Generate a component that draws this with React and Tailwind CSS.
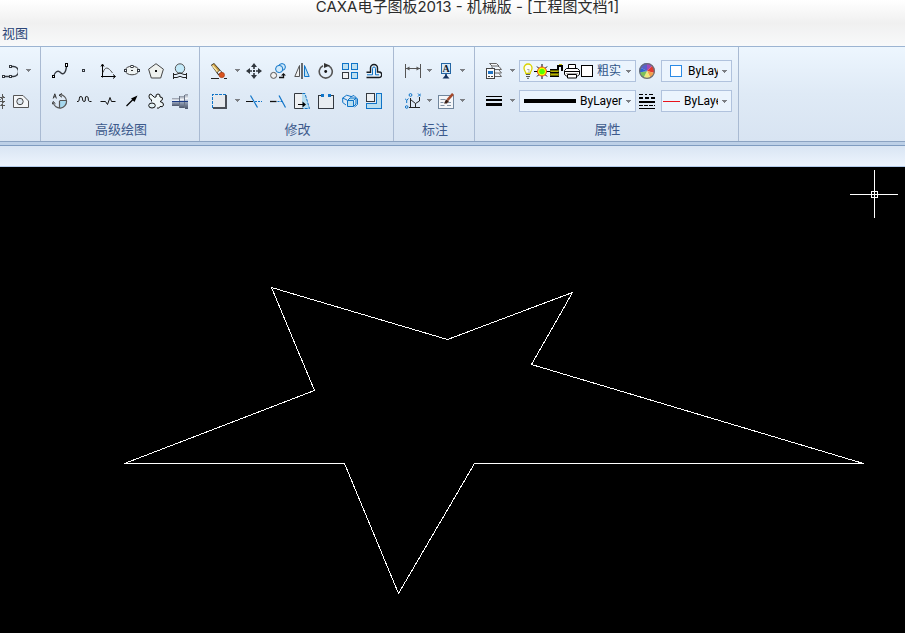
import React from 'react';

const DARK = '#33383f';
const BLUE = '#0f74c8';

const Icon = ({ children, width = 16, crisp = false }) => (
    <svg
        width={width}
        height="16"
        viewBox={`0 0 ${width} 16`}
        fill="none"
        stroke={DARK}
        shapeRendering={crisp ? 'crispEdges' : 'auto'}
        className="block shrink-0"
        aria-hidden="true"
    >
        {children}
    </svg>
);

const icons = {
    polyline: (
        <Icon>
            <path d="M3 13.5H8M10 3.5h1.5a5 5 0 0 1 0 10H10" strokeWidth="1.3" />
            <rect x="0.5" y="12.5" width="2" height="2" fill="#fff" />
            <rect x="7.5" y="12.5" width="2" height="2" fill="#fff" />
            <rect x="7.5" y="2.5" width="2" height="2" fill="#fff" />
        </Icon>
    ),
    hatch: (
        <Icon>
            <path d="M0 4.5H16M0 8.5H16M0 12.5H16M13.5 1V16M9.5 1V16" stroke="#555" />
            <path d="M10 14l5-5M10 8l5-5" stroke="#777" />
        </Icon>
    ),
    region: (
        <Icon>
            <path d="M.5 2.5H10L15.5 8v6.5H.5z" fill="#f4f6f8" stroke="#555" />
            <circle cx="7" cy="8.5" r="3.2" fill="#dfe9f2" stroke="#444" />
        </Icon>
    ),
    spline: (
        <Icon>
            <path d="M1.500 14C2.500 9 6 6.500 8.500 9.500S14 10 14.500 3" strokeWidth="1.4" />
            <rect x="0.5" y="12.5" width="2" height="2" fill="#fff" stroke="#000" />
            <rect x="13.5" y="0.5" width="2" height="3" fill="#fff" stroke="#000" />
        </Icon>
    ),
    point: (
        <Icon crisp>
            <rect x="6.5" y="6.5" width="2" height="2" fill="#e8eef4" />
        </Icon>
    ),
    formula: (
        <Icon>
            <path d="M2.500 2v12.500M1 13.500H15" stroke="#000" />
            <path d="M1 3.500L2.500 1 4 3.500M13 11.500l2.500 2-2.500 2" stroke="#000" />
            <path d="M3 9.500C5 3.500 8 3.500 12.500 10" stroke="#555" />
        </Icon>
    ),
    ellipse: (
        <Icon>
            <ellipse cx="8" cy="7.5" rx="6.8" ry="4.3" fill="#eef3f3" stroke="#444" />
            <rect x="0.5" y="6.5" width="2" height="2" fill="#fff" />
            <rect x="13.5" y="6.5" width="2" height="2" fill="#fff" />
            <rect x="7" y="2.5" width="2" height="2" fill="#fff" />
            <rect x="7" y="7" width="2" height="1" fill="#333" stroke="none" />
        </Icon>
    ),
    polygon: (
        <Icon>
            <path d="M8 .7L15.400 6.200 12.700 15H3.300L.6 6.200z" fill="#eef1ee" stroke="#444" />
            <rect x="7" y="7" width="2" height="2" fill="#111" stroke="none" />
        </Icon>
    ),
    local: (
        <Icon>
            <circle cx="8" cy="5.500" r="4.700" fill="#c3e9f8" stroke="#555" />
            <path d="M1.500 10v6M14.500 10v6M1.500 11.500H4Q8 8.500 12 11.500h2.500M1.500 14.500H5Q8 12 11 14.500h3.500" stroke="#222" />
        </Icon>
    ),
    arcTool: (
        <Icon>
            <path d="M8 8h7a7 7 0 0 1-7 7z" fill="#a6d8ee" stroke="none" />
            <path d="M8 1.700a6.700 6.700 0 1 1-6.700 8M7.500 8v7M7.500 7.500H15" stroke="#555" strokeWidth="1.200" />
            <path d="M10 .5L7 2.200l3 2M0 11.500l1.200-3 2.300 2.300" stroke="#333" />
            <path d="M1.200 5.500L2.800 .8 4.400 5.500M1.800 3.800h2" stroke="#333" />
        </Icon>
    ),
    wave: (
        <Icon>
            <path
                d="M1 8.500h1Q3.300 8.500 3.300 5.800T5 3.500 6.500 6 8 8.500 9.300 6 10.800 3.500 12.300 6 13.700 8.500H15.500"
                stroke="#111"
            />
        </Icon>
    ),
    breakLine: (
        <Icon>
            <path d="M.5 8.500H5.500L7.500 11.500 10 4.500 11.500 8.500H15.500" stroke="#111" />
        </Icon>
    ),
    arrow: (
        <Icon>
            <path d="M2.500 13L9 6.500" stroke="#000" strokeWidth="1.300" />
            <path d="M13.500 2.500L10.500 9 7 5.500z" fill="#000" stroke="none" />
        </Icon>
    ),
    gear: (
        <Icon>
            <path
                d="M1.500 5.500Q.5 3 1.500 1.500T5 3Q6 5 8 4 7.500 1 10 1T12 4Q15 4 14.500 6T12 8.500Q16 9.500 15.500 12T12 13.500Q11 16 9 15M1.500 5.500Q4.500 6.500 3.500 8.500"
                fill="#eff7f9"
                stroke="#111"
            />
            <ellipse cx="4" cy="12.500" rx="3.300" ry="2.500" fill="#e2f1f5" stroke="#111" />
        </Icon>
    ),
    shaft: (
        <Icon crisp>
            <defs>
                <linearGradient id="metal" x1="0" y1="0" x2="0" y2="1">
                    <stop offset="0" stopColor="#8c95a5" />
                    <stop offset="0.3" stopColor="#f2f5f9" />
                    <stop offset="0.5" stopColor="#9aa7be" />
                    <stop offset="1" stopColor="#4c566b" />
                </linearGradient>
            </defs>
            <g fill="url(#metal)" stroke="none">
                <rect x="0" y="5" width="7" height="8" />
                <rect x="7" y="3" width="5" height="12" />
                <rect x="13" y="1" width="3" height="15" />
            </g>
            <path d="M7.500 3v12M12.500 2v13" stroke="#6a7485" />
            <path d="M0 8.500H16" stroke="#1d3c86" />
        </Icon>
    ),
    erase: (
        <Icon>
            <path d="M0 2L3 0l8.500 9.500-4 3z" fill="#2f2718" stroke="none" />
            <path d="M.8 2.200L3 .8l5.500 6.400-2.600 2z" fill="#c99c45" stroke="none" />
            <path d="M1.500 2.500l5 6" stroke="#fbe9a8" strokeWidth="1.400" />
            <path d="M6.500 9.300L9 7.400l1.500 1.800-2.700 2z" fill="#f0f2f4" stroke="none" />
            <circle cx="10.800" cy="12" r="2.700" fill="#d9531e" stroke="#9c3612" strokeWidth=".6" />
            <path d="M0 15.500H8M13 15.500h3" stroke="#222" />
        </Icon>
    ),
    move: (
        <Icon>
            <path d="M8 2v4M8 10v4M2 8h4M10 8h4" stroke="#30363d" strokeWidth="1.600" />
            <path d="M8 0l3 4H5zM8 16l3-4H5zM0 8l4-3v6zM16 8l-4-3v6z" fill="#30363d" stroke="none" />
            <rect x="7" y="7" width="2" height="2" fill="#30363d" stroke="none" />
        </Icon>
    ),
    copy: (
        <Icon>
            <circle cx="12" cy="4" r="3.400" stroke={BLUE} fill="#d2eafa" />
            <circle cx="9.200" cy="6" r="3.600" stroke={BLUE} fill="#d2eafa" />
            <circle cx="3.600" cy="12.400" r="3" stroke="#555" fill="#f1f1f1" />
            <path d="M9 14.500h4.500V11" stroke="#111" strokeWidth="1.300" />
            <path d="M11 12.500L13.500 10l2.500 2.500z" fill="#111" stroke="none" />
        </Icon>
    ),
    mirror: (
        <Icon>
            <path d="M5.500 2.500v11H.8z" fill="#f2f3f3" stroke="#555" />
            <path d="M10.500 2.500v11h4.700z" fill="#bfe0ef" stroke={BLUE} />
            <path d="M8 0v16" stroke="#111" strokeWidth="1.200" />
        </Icon>
    ),
    rotate: (
        <Icon>
            <path d="M10.500 2.700a6.500 6.500 0 1 1-5.500 0" stroke="#555" strokeWidth="1.600" />
            <path d="M6 0l6 2.500L6 5z" fill="#333" stroke="none" />
            <circle cx="7.700" cy="8.500" r="1.400" fill="#111" stroke="none" />
        </Icon>
    ),
    array: (
        <Icon crisp>
            <rect x="0.5" y="0.5" width="6" height="6" fill="#bfe0f0" stroke={BLUE} />
            <rect x="9.5" y="0.5" width="6" height="6" fill="#bfe0f0" stroke={BLUE} />
            <rect x="9.5" y="9.5" width="6" height="6" fill="#bfe0f0" stroke={BLUE} />
            <rect x="0.5" y="9.5" width="6" height="6" fill="#f0f1f2" />
        </Icon>
    ),
    offset: (
        <Icon>
            <path
                d="M.5 14.500h12.500a2.500 2.500 0 0 0 0-5.500h-1.500V5a3.500 3.500 0 0 0-7 0v4.300H.5"
                fill="#e6f1fa"
                stroke="#171b20"
                strokeWidth="1.400"
            />
            <path d="M1 11.800h5.500V5.500a1.500 1.500 0 0 1 3 0v6.300H13" stroke={BLUE} />
        </Icon>
    ),
    block: (
        <Icon crisp>
            <rect x="1" y="1" width="14" height="14" fill="#e6e9ed" stroke="none" />
            <path d="M1.500 15V1.500h13" stroke={BLUE} strokeDasharray="3 1" />
            <path d="M15 2v13H2" stroke="#4a4f57" strokeWidth="2" />
        </Icon>
    ),
    trim: (
        <Icon>
            <path d="M0 8.500H7" stroke="#111" />
            <path d="M9 8.500h7" stroke={BLUE} strokeDasharray="2 1" />
            <path d="M4.500 2.500L11.500 14.500" stroke={BLUE} strokeWidth="1.200" />
        </Icon>
    ),
    extend: (
        <Icon>
            <path d="M0 8.500H6.500" stroke="#111" strokeWidth="1.300" />
            <path d="M7.500 8.500h5" stroke={BLUE} strokeDasharray="2 1" />
            <path d="M9 2.500L15.500 14.500" stroke={BLUE} strokeWidth="1.200" />
        </Icon>
    ),
    stretch: (
        <Icon>
            <path d="M8 .5H.5v15H8z" fill="#eef0f2" stroke="none" />
            <path d="M8 .5h3l4.500 15H8z" fill="#b9def0" stroke="none" />
            <path d="M8.500 .5H.5v15H9" />
            <path d="M8.500 .5H11L15.500 15.500H9" stroke={BLUE} strokeDasharray="3 1" />
            <path d="M4 11.500h5" stroke="#000" />
            <path d="M8.500 8.500l3.500 3-3.500 3z" fill="#000" stroke="none" />
        </Icon>
    ),
    breakEdge: (
        <Icon crisp>
            <rect x="0.5" y="2.5" width="15" height="13" fill="#e9edf1" stroke="none" />
            <path d="M3 2.500H.5v13h15V2.500H13" />
            <rect x="3" y="1" width="3" height="3" fill={BLUE} stroke="none" />
            <rect x="10" y="1" width="3" height="3" fill={BLUE} stroke="none" />
        </Icon>
    ),
    explode: (
        <Icon>
            <path d="M.7 5l4-2.800 5 1.500M.7 5v4.500L4 12M.7 5l4.300 2M8 4l4-1.500 3.500 3.500v5.500L12.500 14" stroke={BLUE} />
            <path d="M5.500 7.500h6v6h-6zM5.500 7.500L8 5h6l-2.500 2.500M14 5v6l-2.500 2.500" fill="#b9def0" stroke={BLUE} />
        </Icon>
    ),
    scale: (
        <Icon crisp>
            <path d="M10.500 .5h5v15H.5v-5h10z" fill="#b9def0" stroke={BLUE} />
            <rect x="0.5" y="0.5" width="8" height="8" fill="#eceff2" />
        </Icon>
    ),
    dimension: (
        <Icon>
            <path d="M.5 1v14M15.500 1v14M1 5.500h14" stroke="#555" />
            <path d="M1 5.500l3.500-2v4zM15 5.500l-3.500-2v4z" fill="#555" stroke="none" />
        </Icon>
    ),
    datum: (
        <Icon>
            <rect x="3.5" y="0.5" width="9" height="10" fill="#d7e8f6" stroke="#2466a4" />
            <text
                x="8"
                y="9"
                textAnchor="middle"
                stroke="none"
                fill="#10182c"
                className="font-['Liberation_Serif',serif] text-[10px] font-bold"
            >
                A
            </text>
            <path d="M8 11v2" stroke="#12305e" strokeWidth="1.500" />
            <path d="M8 11.500l3.500 4h-7z" fill="#12305e" stroke="none" />
        </Icon>
    ),
    coordinate: (
        <Icon>
            <path d="M5.500 5v9.500M4 14.500h11M5.500 6.500L10.500 10.500V14M10.500 10.500L14.500 8V4" stroke="#222" />
            <circle cx="5.500" cy="2" r="1.400" stroke={BLUE} />
            <circle cx="1.700" cy="14" r="1.300" stroke={BLUE} />
            <path d="M13 .5l3 3M16 .5l-3 3M0 5.500l1.700 2 1.700-2M1.700 7.500v2.500" stroke={BLUE} />
        </Icon>
    ),
    editText: (
        <Icon>
            <rect x="0.5" y="2.5" width="15" height="13" fill="#f4f6f9" stroke="#71869d" />
            <path d="M2.500 6.500h5M2.500 9.500h3M2.500 12.500h4M9 12.500h4M10 9.500h3" stroke="#8393a5" />
            <path d="M6 10.500L8 6.500l3 1.500-2 2.500z" fill="#3a1e14" stroke="none" />
            <path d="M9.500 7L15 .8" stroke="#a4492c" strokeWidth="2.600" />
        </Icon>
    ),
    layers: (
        <Icon>
            <path d="M3.500 .5h7l2.500 2.500H6zM12 3.500h1l2.500 3H9M13 7l2.500 3H9M9 13.500h6.500L13 10.500" fill="#f5f7f9" stroke="#666" />
            <path d="M5 3.500L8 6" stroke="#777" />
            <rect x="0.5" y="5.5" width="8" height="10" fill="#fafbfc" stroke="#444" />
            <rect x="2" y="8" width="5" height="3" fill="#1e73c4" stroke="none" />
            <path d="M2 13.500h2M5 13.500h2" stroke="#444" />
        </Icon>
    ),
    lineWidth: (
        <Icon crisp>
            <g fill="#000" stroke="none">
                <rect x="0" y="3" width="16" height="1" />
                <rect x="0" y="6" width="16" height="2" />
                <rect x="0" y="10" width="16" height="3" />
            </g>
        </Icon>
    ),
    lineType: (
        <Icon crisp>
            <g stroke="#000">
                <path d="M0 1.500H16" strokeDasharray="4 2 2 2" />
                <path d="M0 5H16" strokeWidth="2" strokeDasharray="4 2" />
                <path d="M0 9H16" strokeWidth="2" />
                <path d="M0 12.500H16" strokeDasharray="4 1" />
                <path d="M0 15.500H16" />
            </g>
        </Icon>
    ),
    colorWheel: (
        <Icon>
            <g stroke="none">
                <path d="M8 8L1 4.500A8 8 0 0 1 8 0z" fill="#5a62c8" />
                <path d="M8 8V0a8 8 0 0 1 5.500 2.500z" fill="#a24bb8" />
                <path d="M8 8l5.500-5.500A8 8 0 0 1 15.500 10z" fill="#e23b30" />
                <path d="M8 8l7.500 2a8 8 0 0 1-4 5z" fill="#f3a04a" />
                <path d="M8 8l3.500 7a8 8 0 0 1-7 0z" fill="#f0e87a" />
                <path d="M8 8l-3.500 7A8 8 0 0 1 .5 9.500z" fill="#7cc05a" />
                <path d="M8 8L.5 9.500A8 8 0 0 1 1 4.500z" fill="#2d62cf" />
            </g>
            <circle cx="8" cy="8" r="7.400" stroke="#6b6f78" strokeWidth="1.200" />
        </Icon>
    ),
    bulb: (
        <Icon width={12}>
            <path d="M3.800 10.500C3.800 8.500 2 7.800 2 5a4 4 0 0 1 8 0c0 2.800-1.800 3.500-1.800 5.500z" fill="#fffef0" stroke="#d9d200" strokeWidth="1.300" />
            <path d="M4 11.500h4M4 13.500h4M5 15.300h2" stroke="#555" />
            <path d="M5 6l1 1 1-1v4" stroke="#999" strokeWidth=".7" />
        </Icon>
    ),
    sun: (
        <Icon>
            <path d="M8 1v15M0 8.500h16M3 3.500l10 10M13 3.500l-10 10" stroke="#000" />
            <circle cx="8" cy="8.500" r="4.500" fill="#ff0" stroke="#e8401c" />
            <circle cx="8" cy="8.500" r="2.800" fill="#5f0" stroke="none" />
        </Icon>
    ),
    lock: (
        <Icon width={14} crisp>
            <rect x="0" y="6" width="9" height="8" fill="#6a6a00" stroke="none" />
            <path d="M0 6.500h9M0 9.500h9M0 13.500h9" stroke="#000" />
            <path d="M1 8h7M1 11.500h7" stroke="#b5b000" />
            <path d="M8 6V2.500h4V8" stroke="#000" strokeWidth="2" />
            <path d="M9 1.500h3" stroke="#c8c400" />
        </Icon>
    ),
    printer: (
        <Icon>
            <path d="M4.500 5.500V1.500h7v4" fill="#fff" stroke="#000" />
            <path d="M2.500 5.500h11l2 2v4l-2 1.500h-11l-2-1.500v-4z" fill="#fff" stroke="#000" />
            <path d="M1 8.500h14" stroke="#000" />
            <path d="M2 10.500h12" stroke="#aaa" />
            <path d="M3.500 11.500h9v3.500h-9z" fill="#fff" stroke="#000" />
        </Icon>
    ),
};

const ToolButton = ({ icon, label }) => (
    <button type="button" aria-label={label} className="flex h-full w-6 shrink-0 items-center justify-center">
        {icons[icon]}
    </button>
);

const Caret = () => (
    <svg width="5" height="3" viewBox="0 0 5 3" shapeRendering="crispEdges" className="block shrink-0" aria-hidden="true">
        <path d="M0 0h5v1H4v1H3v1H2V2H1V1H0z" fill="#7c7f84" />
    </svg>
);

const MenuButton = ({ label, narrow }) => (
    <button
        type="button"
        aria-label={label}
        className={`flex h-5 shrink-0 items-center ${narrow ? 'w-[9px] justify-center' : 'w-[11px] justify-end pr-[2px]'}`}
    >
        <Caret />
    </button>
);

const Row = ({ children, className = '' }) => (
    <div className={`flex h-[22px] ${className}`}>{children}</div>
);

const Group = ({ title, children, className }) => (
    <section className={`flex shrink-0 flex-col gap-2 overflow-hidden border-r border-[#a9bad2] px-[7px] pt-[13px] ${className}`}>
        {children}
        {title && <h2 className="pl-[2px] text-center text-[13px] leading-5 text-[#3d5a8c]">{title}</h2>}
    </section>
);

const Combo = ({ label, value, options, children, className, selectClass = 'text-black' }) => (
    <div className={`flex shrink-0 items-center border border-[#b0c2dd] bg-[#ebf4fd] ${className}`}>
        {children}
        <select
            aria-label={label}
            defaultValue={value}
            className={`h-5 min-w-0 flex-1 appearance-none bg-transparent text-[12px] leading-5 outline-none ${selectClass}`}
        >
            {options.map((option) => (
                <option key={option}>{option}</option>
            ))}
        </select>
        <span className="pointer-events-none flex w-[13px] shrink-0 justify-center">
            <Caret />
        </span>
    </div>
);

const drawTools = [
    [
        ['spline', '样条'],
        ['point', '点'],
        ['formula', '公式曲线'],
        ['ellipse', '椭圆'],
        ['polygon', '正多边形'],
        ['local', '局部放大图'],
    ],
    [
        ['arcTool', '圆弧拟合样条'],
        ['wave', '波浪线'],
        ['breakLine', '双折线'],
        ['arrow', '箭头'],
        ['gear', '齿轮'],
        ['shaft', '孔/轴'],
    ],
];

const modifyTools = [
    [
        ['erase', '删除'],
        ['move', '平移'],
        ['copy', '平移复制'],
        ['mirror', '镜像'],
        ['rotate', '旋转'],
        ['array', '阵列'],
        ['offset', '等距线'],
    ],
    [
        ['block', '块'],
        ['trim', '裁剪'],
        ['extend', '延伸'],
        ['stretch', '拉伸'],
        ['breakEdge', '打断'],
        ['explode', '分解'],
        ['scale', '缩放'],
    ],
];

const Ribbon = () => (
    <div className="flex overflow-hidden border-y border-t-[#9cb4d2] border-b-[#8ba3c2] bg-linear-to-b from-[#edf6fe] via-[#dfeaf6] to-[#d8e4f2]">
        <Group className="h-[94px] w-[41px]">
            <Row className="justify-end">
                <ToolButton icon="polyline" label="多段线" />
                <MenuButton label="多段线选项" />
            </Row>
            <Row className="justify-end">
                <ToolButton icon="hatch" label="剖面线" />
                <ToolButton icon="region" label="填充" />
            </Row>
        </Group>

        <Group title="高级绘图" className="w-[159px]">
            {drawTools.map((row, i) => (
                <Row key={i}>
                    {row.map(([icon, label]) => (
                        <ToolButton key={icon} icon={icon} label={label} />
                    ))}
                </Row>
            ))}
        </Group>

        <Group title="修改" className="w-[194px]">
            {modifyTools.map(([first, ...rest], i) => (
                <Row key={i}>
                    <ToolButton icon={first[0]} label={first[1]} />
                    <MenuButton label={`${first[1]}选项`} />
                    {rest.map(([icon, label]) => (
                        <ToolButton key={icon} icon={icon} label={label} />
                    ))}
                </Row>
            ))}
        </Group>

        <Group title="标注" className="w-[81px]">
            <Row>
                <ToolButton icon="dimension" label="尺寸标注" />
                <MenuButton label="尺寸标注选项" narrow />
                <ToolButton icon="datum" label="基准代号" />
                <MenuButton label="基准代号选项" narrow />
            </Row>
            <Row>
                <ToolButton icon="coordinate" label="坐标标注" />
                <MenuButton label="坐标标注选项" narrow />
                <ToolButton icon="editText" label="文字" />
                <MenuButton label="文字选项" narrow />
            </Row>
        </Group>

        <Group title="属性" className="w-[264px]">
            <Row>
                <ToolButton icon="layers" label="图层" />
                <MenuButton label="图层选项" />
                <Combo
                    label="当前图层"
                    value="粗实"
                    options={['粗实', '细实', '虚线']}
                    className="ml-[2px] w-[117px] pl-[2px]"
                    selectClass="text-[#2f5488]"
                >
                    {icons.bulb}
                    {icons.sun}
                    {icons.lock}
                    {icons.printer}
                    <span className="mr-1 ml-px h-3 w-3 shrink-0 border border-black bg-white"></span>
                </Combo>
                <button type="button" aria-label="颜色" className="mr-[6px] ml-[3px] flex items-center">
                    {icons.colorWheel}
                </button>
                <Combo label="颜色" value="ByLayer" options={['ByLayer', 'ByBlock']} className="w-[71px] pl-2">
                    <span className="mr-[6px] h-3 w-3 shrink-0 border border-[#2b8be6] bg-white"></span>
                </Combo>
            </Row>
            <Row>
                <ToolButton icon="lineWidth" label="线宽" />
                <MenuButton label="线宽选项" />
                <Combo label="线宽" value="ByLayer" options={['ByLayer', 'ByBlock']} className="ml-[2px] w-[117px] pl-1">
                    <span className="mr-1 h-1 w-[52px] shrink-0 bg-black"></span>
                </Combo>
                <button type="button" aria-label="线型" className="mr-[6px] ml-[3px] flex items-center">
                    {icons.lineType}
                </button>
                <Combo label="线型" value="ByLayer" options={['ByLayer', 'ByBlock']} className="w-[71px] pl-px">
                    <span className="mr-1 h-px w-[17px] shrink-0 bg-[#e8141c]"></span>
                </Combo>
            </Row>
        </Group>
    </div>
);

const Drawing = () => (
    <svg
        viewBox="0 0 905 466"
        preserveAspectRatio="xMinYMin meet"
        fill="none"
        stroke="#fff"
        shapeRendering="crispEdges"
        className="block min-h-0 w-full flex-1"
        role="img"
        aria-label="绘图区"
    >
        <path d="M271.500 120.500L447.500 172.500 572.500 125.500 531.500 197.500 863.500 296.500H474.500L398.500 426.500 344.500 296.500H124.500L314.500 223.500z" />
        {/* Cursor */}
        <path d="M850 27.500h48M874.500 3v48" />
        <rect x="871.5" y="24.5" width="6" height="6" />
    </svg>
);

const App = () => {
    return (
        <div className="flex h-screen flex-col overflow-hidden bg-black font-['Roboto','Noto_Sans_CJK_SC',sans-serif]">
            <header className="flex h-[46px] shrink-0 flex-col justify-between bg-linear-to-b from-white via-[#f0f0f0] to-[#f8f9fa]">
                <h1 className="pl-[30px] text-center font-['Inter','Noto_Sans_CJK_SC',sans-serif] text-[15px] leading-[14px] whitespace-nowrap text-[#2c2c2c]">
                    CAXA电子图板2013 - 机械版 - [工程图文档1]
                </h1>
                <nav className="flex px-[2px] pb-[2px]">
                    <button type="button" className="text-[13px] leading-5 text-[#2b4577]">视图</button>
                </nav>
            </header>

            <Ribbon />

            <div className="h-1 shrink-0 border-b border-[#7f9cc0] bg-[#bdd0e7]"></div>
            <div className="h-[21px] shrink-0 border-b border-[#b4cceb] bg-linear-to-b from-[#d9e5f3] to-[#edf4fd]"></div>

            <Drawing />
        </div>
    );
};

export default App;
